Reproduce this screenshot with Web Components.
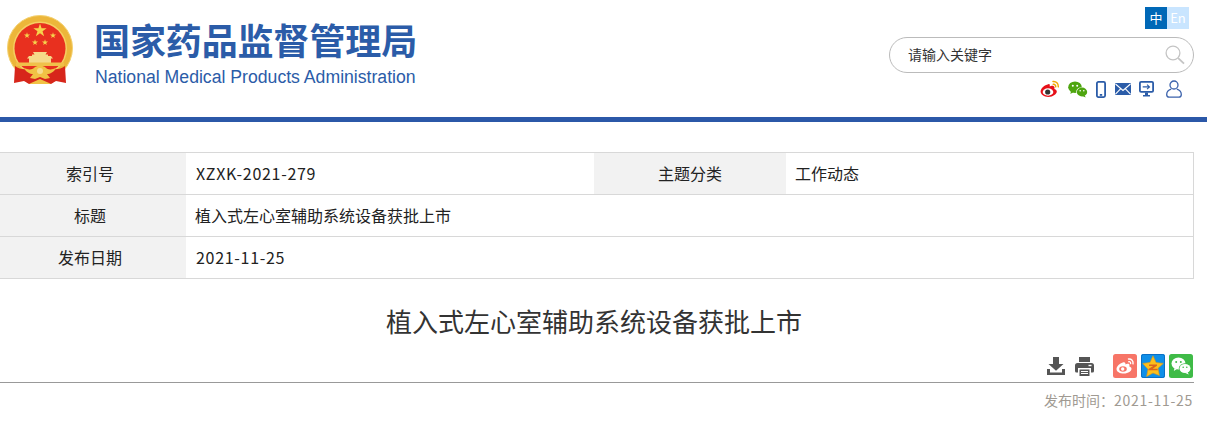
<!DOCTYPE html>
<html lang="zh-CN">
<head>
<meta charset="utf-8">
<title>植入式左心室辅助系统设备获批上市</title>
<style>
  html, body { margin: 0; padding: 0; background: #fff; overflow: hidden; }
  body { font-family: "Noto Sans CJK SC", "Liberation Sans", sans-serif; color: #333; }
</style>
</head>
<body>
<site-header></site-header>
<info-table>
  <info-row>
    <info-cell label="索引号" latin>XZXK-2021-279</info-cell>
    <info-cell label="主题分类" second>工作动态</info-cell>
  </info-row>
  <info-row><info-cell label="标题" wide>植入式左心室辅助系统设备获批上市</info-cell></info-row>
  <info-row><info-cell label="发布日期" wide latin>2021-11-25</info-cell></info-row>
</info-table>
<article-head date="2021-11-25">植入式左心室辅助系统设备获批上市</article-head>

<script>
const ICONS = {
  weibo: `<svg width="20" height="18" viewBox="0 0 20 18"><path d="M8.300 4.200C4.500 5 .6 8.400.6 11.600c0 3 3.500 5.400 7.700 5.400 5 0 8.500-3 8.500-5.400 0-1.800-1.700-2.400-2.500-2.700.5-1.300.4-2.700-1-3-1.200-.3-3 .5-3.600.7.300-1.100.3-3.300-1.400-2.400z" fill="#e60f18"/><ellipse cx="8" cy="12" rx="5.300" ry="3.700" fill="#fff"/><circle cx="7.700" cy="12" r="2.600" fill="#333"/><path d="M13 1.500c3-.5 5.700 2 5.300 5.300M13.300 4.300c1.500-.2 2.700 1 2.400 2.500" fill="none" stroke="#f0a800" stroke-width="1.500" stroke-linecap="round"/></svg>`,
  wechat: `<svg width="20" height="17" viewBox="0 0 20 17"><ellipse cx="7" cy="6.200" rx="6.800" ry="5.800" fill="#4ea50f"/><path d="M3 10l-.6 3 3.200-2z" fill="#4ea50f"/><ellipse cx="14" cy="11" rx="5.800" ry="4.800" fill="#fff"/><ellipse cx="14" cy="11" rx="5.200" ry="4.400" fill="#4ea50f"/><path d="M16.500 14l1.200 2.600-3.400-1.700z" fill="#4ea50f"/><circle cx="4.800" cy="4.700" r="1" fill="#fff"/><circle cx="9.200" cy="4.700" r="1" fill="#fff"/><circle cx="12.200" cy="9.800" r=".8" fill="#fff"/><circle cx="15.800" cy="9.800" r=".8" fill="#fff"/></svg>`,
  phone: `<svg width="10" height="17" viewBox="0 0 10 17"><rect x=".9" y=".9" width="8.200" height="15.200" rx="1.500" fill="none" stroke="#2b5ca8" stroke-width="1.800"/><rect x="3.800" y="13" width="2.400" height="1.800" fill="#2b5ca8"/></svg>`,
  mail: `<svg width="16" height="12" viewBox="0 0 16 12"><rect width="16" height="12" rx="1" fill="#2b5ca8"/><path d="M.5 1L8 7.500 15.500 1M.5 11.200l5.300-5.500M15.500 11.200l-5.300-5.500" fill="none" stroke="#fff" stroke-width="1.100"/></svg>`,
  screen: `<svg width="15" height="16" viewBox="0 0 15 16"><rect x=".9" y=".9" width="13.200" height="10" rx="1.200" fill="none" stroke="#2b5ca8" stroke-width="1.800"/><path d="M3.700 5.900h7M8 3.700l2.500 2.200L8 8.100" fill="none" stroke="#2b5ca8" stroke-width="1.100"/><path d="M6 11.500h3V14h2v1.500H4V14h2z" fill="#2b5ca8"/></svg>`,
  user: `<svg width="16" height="18" viewBox="0 0 16 18"><circle cx="8" cy="5" r="4" fill="none" stroke="#3b62ac" stroke-width="1.300"/><path d="M5.200 9.200C2.500 10 .7 12 .7 14.500c0 1.800.8 2.700 2.500 2.700h9.600c1.700 0 2.500-.9 2.500-2.700 0-2.500-1.800-4.500-4.500-5.300" fill="none" stroke="#3b62ac" stroke-width="1.300"/></svg>`,
  search: `<svg width="20" height="20" viewBox="0 0 20 20"><circle cx="8" cy="8" r="6.900" fill="none" stroke="#c4c4c4" stroke-width="1.300"/><path d="M13.200 13.200l5.800 5.400" stroke="#c4c4c4" stroke-width="1.800"/></svg>`,
  download: `<svg width="18" height="18" viewBox="0 0 18 18"><path d="M6 0h6v7h4.500L9 13.800 1.500 7H6z" fill="#555"/><path d="M0 12h3v3.500h12V12h3v6H0z" fill="#555"/></svg>`,
  print: `<svg width="19" height="19" viewBox="0 0 19 19"><path d="M4 0h11v5H4z" fill="#555"/><path d="M2.500 6h14A2.500 2.500 0 0 1 19 8.500v5.500a1.500 1.500 0 0 1-1.500 1.500H16V11H3v4.500H1.500A1.500 1.500 0 0 1 0 14V8.500A2.500 2.500 0 0 1 2.500 6z" fill="#555"/><path d="M4.500 12.500h10V19h-10z" fill="#555"/><path d="M6 14.500h7M6 16.500h7" stroke="#fff"/><rect x="13.500" y="7.800" width="3" height="1.400" fill="#fff"/></svg>`,
  shareWeibo: `<svg width="24" height="24" viewBox="0 0 24 24"><rect width="24" height="24" rx="2.500" fill="#f77567"/><path d="M9.800 8.500c-3 1-6.300 3.700-6.300 6.400 0 2.800 3.500 4.600 7.200 4.600 4.800 0 7.800-2.700 7.800-4.800 0-1.500-1.400-2-2.200-2.300.4-1.200.3-2.300-.9-2.600-1-.2-2.400.4-3 .6.200-1-.1-2.700-2.600-1.900z" fill="#fff"/><ellipse cx="10" cy="15" rx="3.800" ry="2.800" fill="#f77567"/><circle cx="9.700" cy="15" r="1.700" fill="#fff"/><path d="M15.500 5c3-.4 5 2 4.500 4.800M15.800 7.700c1.200-.2 2 .7 1.800 1.900" fill="none" stroke="#fff" stroke-width="1.400" stroke-linecap="round"/></svg>`,
  shareQzone: `<svg width="24" height="24" viewBox="0 0 24 24"><rect width="24" height="24" rx="2" fill="#0f8fe8"/><rect x=".5" y=".5" width="23" height="23" rx="2" fill="none" stroke="#0b6fc4"/><path d="M12 1.800l3 6.700 7.300.9-5.300 4.800 1.400 7.300L12 19l-6.400 3.500L7 15.200 1.700 9.400 9 8.500z" fill="#fdbf1c" stroke="#e09a10" stroke-width=".6"/><path d="M8 10.500h8v1.300l-4.300 3H16.300l.7 1.500H7.500v-1.300l4.700-3H8z" fill="#d9651e"/></svg>`,
  shareWechat: `<svg width="24" height="24" viewBox="0 0 24 24"><rect width="24" height="24" rx="2.500" fill="#3fbb47"/><ellipse cx="9.500" cy="9.500" rx="7" ry="6" fill="#fff"/><path d="M5.500 14l-.7 3 3.200-2z" fill="#fff"/><ellipse cx="16" cy="14.500" rx="6.200" ry="5.200" fill="#3fbb47"/><ellipse cx="16" cy="14.500" rx="5.500" ry="4.600" fill="#fff"/><path d="M18.500 18l1.300 2.500-3.500-1.600z" fill="#fff"/><circle cx="7.200" cy="8" r="1" fill="#3fbb47"/><circle cx="11.800" cy="8" r="1" fill="#3fbb47"/><circle cx="14.200" cy="13.300" r=".8" fill="#3fbb47"/><circle cx="17.800" cy="13.300" r=".8" fill="#3fbb47"/></svg>`
}

class SiteIcon extends HTMLElement {
  constructor () {
    super()
    this.attachShadow({ mode: 'open' })
  }

  connectedCallback () {
    this.shadowRoot.innerHTML = `<style>:host { display: block; line-height: 0; }</style>${ICONS[this.getAttribute('name')]}`
  }
}

const STAR = 'M0-1L.2245-.309H.951L.363.118.588.809 0 .382-.588.809-.363.118-.951-.309H-.2245z'

const emblemTemplate = document.createElement('template')
emblemTemplate.innerHTML = `
  <style>:host { display: block; width: 67px; height: 72px; line-height: 0; }</style>
  <svg width="67" height="72" viewBox="0 0 67 72">
    <circle cx="33" cy="33" r="32.500" fill="#ecb63a" stroke="#f4d272"/>
    <circle cx="33" cy="33.500" r="27" fill="#f5cf62"/>
    <circle cx="33" cy="33.500" r="25.500" fill="#e8301f"/>
    <path transform="translate(33 15.500) scale(7)" d="${STAR}" fill="#f6d34c"/>
    <path transform="translate(20 20.500) scale(3.200)" d="${STAR}" fill="#f6d34c"/>
    <path transform="translate(46 20.500) scale(3.200)" d="${STAR}" fill="#f6d34c"/>
    <path transform="translate(28 27.500) scale(3.200)" d="${STAR}" fill="#f6d34c"/>
    <path transform="translate(38 27.500) scale(3.200)" d="${STAR}" fill="#f6d34c"/>
    <path d="M26 37h14l-1.500 2.500H41V41h3l2 2.500h-2V48H22v-4.500h-2l2-2.500h3v-1.500h2.500z" fill="#f5d98a"/>
    <rect x="9" y="47.500" width="48" height="3.500" fill="#f0c04a"/>
    <path d="M8 51c5 4 11 4 17 2h16c6 2 12 2 17-2l1 17-10-2-5 3H22l-5-3-10 2z" fill="#d7261b"/>
    <path d="M17 53c4 2 9 2 11-1l5-2 5 2c2 3 7 3 11 1-2 4-6 6-9 6l3 4-5 1-5-2-5 2-5-1 3-4c-3 0-7-2-9-6z" fill="#f1c245"/>
    <circle cx="33" cy="56" r="3" fill="#f7dc8f"/>
    <path d="M24 68l9-4 9 4 2 1H22z" fill="#f1c245"/>
  </svg>
`

class SiteEmblem extends HTMLElement {
  constructor () {
    super()
    this.attachShadow({ mode: 'open' })
    this.shadowRoot.appendChild(emblemTemplate.content.cloneNode(true))
  }
}

const searchTemplate = document.createElement('template')
searchTemplate.innerHTML = `
  <style>
    :host {
      display: flex;
      align-items: center;
      justify-content: space-between;
      box-sizing: border-box;
      width: 305px;
      height: 36px;
      padding: 0 8px 0 18px;
      border: 1px solid #bbb;
      border-radius: 18px;
      font-size: 14px;
      color: #333;
    }
    span { margin-bottom: 2px; }
  </style>
  <span>请输入关键字</span>
  <site-icon name="search"></site-icon>
`

class SearchBox extends HTMLElement {
  constructor () {
    super()
    this.attachShadow({ mode: 'open' })
    this.shadowRoot.appendChild(searchTemplate.content.cloneNode(true))
  }
}

const headerTemplate = document.createElement('template')
headerTemplate.innerHTML = `
  <style>
    :host {
      display: block;
      box-sizing: border-box;
      height: 122px;
      border-bottom: 5px solid #2b58a8;
      padding: 7px 13px 0 7px;
    }
    .wrap { display: flex; justify-content: space-between; }
    .brand { display: flex; padding-top: 8px; }
    .names { margin: 4px 0 0 21px; color: #2b5ca8; }
    .cn {
      font-size: 36px;
      line-height: 40px;
      font-weight: 700;
      letter-spacing: -.1px;
      margin-left: -1px;
      white-space: nowrap;
    }
    .en {
      margin-top: 8px;
      font: 17.650px/20px "Liberation Sans", sans-serif;
      white-space: nowrap;
    }
    .tools { display: flex; flex-direction: column; align-items: flex-end; }
    .lang { display: flex; margin-right: 5px; font-size: 13px; line-height: 21px; text-align: center; color: #fff; }
    .lang span { width: 22px; height: 22px; background: #c9e5ff; }
    .lang .on { background: #0068b7; }
    search-box { margin-top: 8px; }
    .icons { display: flex; align-items: center; height: 18px; margin: 7px 12px 0 0; }
  </style>
  <div class="wrap">
    <div class="brand">
      <site-emblem></site-emblem>
      <div class="names">
        <div class="cn">国家药品监督管理局</div>
        <div class="en">National Medical Products Administration</div>
      </div>
    </div>
    <div class="tools">
      <div class="lang"><span class="on">中</span><span>En</span></div>
      <search-box></search-box>
      <div class="icons">
        <site-icon name="weibo"></site-icon>
        <site-icon name="wechat" style="margin-left:8px"></site-icon>
        <site-icon name="phone" style="margin-left:8px"></site-icon>
        <site-icon name="mail" style="margin-left:9px"></site-icon>
        <site-icon name="screen" style="margin-left:8px"></site-icon>
        <site-icon name="user" style="margin-left:12px"></site-icon>
      </div>
    </div>
  </div>
`

class SiteHeader extends HTMLElement {
  constructor () {
    super()
    this.attachShadow({ mode: 'open' })
    this.shadowRoot.appendChild(headerTemplate.content.cloneNode(true))
  }
}

const tableTemplate = document.createElement('template')
tableTemplate.innerHTML = `
  <style>
    :host {
      display: block;
      box-sizing: border-box;
      width: 1194px;
      margin-top: 30px;
      border-top: 1px solid #d8d8d8;
      border-right: 1px solid #d8d8d8;
      font-size: 16px;
      color: #222;
    }
  </style>
  <slot></slot>
`

class InfoTable extends HTMLElement {
  constructor () {
    super()
    this.attachShadow({ mode: 'open' })
    this.shadowRoot.appendChild(tableTemplate.content.cloneNode(true))
  }
}

const rowTemplate = document.createElement('template')
rowTemplate.innerHTML = `
  <style>
    :host {
      display: flex;
      height: 42px;
      box-sizing: border-box;
      border-bottom: 1px solid #d8d8d8;
    }
  </style>
  <slot></slot>
`

class InfoRow extends HTMLElement {
  constructor () {
    super()
    this.attachShadow({ mode: 'open' })
    this.shadowRoot.appendChild(rowTemplate.content.cloneNode(true))
  }
}

const cellTemplate = document.createElement('template')
cellTemplate.innerHTML = `
  <style>
    :host { display: flex; flex: 0 0 594px; line-height: 41px; }
    :host([wide]), :host([second]) { flex: 1 1 auto; }
    #label { box-sizing: border-box; flex: 0 0 186px; padding-right: 6px; background: #f2f2f2; text-align: center; }
    :host([second]) #label { flex-basis: 192px; padding-right: 0; }
    .value { padding-left: 9px; }
    :host([latin]) .value { padding-left: 10px; letter-spacing: .7px; }
  </style>
  <div id="label"></div>
  <div class="value"><slot></slot></div>
`

class InfoCell extends HTMLElement {
  constructor () {
    super()
    this.attachShadow({ mode: 'open' })
    this.shadowRoot.appendChild(cellTemplate.content.cloneNode(true))
    this.elLabel = this.shadowRoot.querySelector('#label')
  }

  connectedCallback () {
    this.elLabel.textContent = this.getAttribute('label')
  }
}

const articleTemplate = document.createElement('template')
articleTemplate.innerHTML = `
  <style>
    :host { display: block; width: 1194px; }
    h1 {
      margin: 23px 0 0;
      padding-right: 6px;
      font-size: 26px;
      line-height: 38px;
      font-weight: 400;
      text-align: center;
      color: #333;
    }
    .tools {
      display: flex;
      align-items: center;
      justify-content: flex-end;
      height: 24px;
      margin-top: 14px;
      padding: 0 1px 4px 0;
      border-bottom: 1px solid #999;
    }
    .date { margin-top: 7px; padding-right: 1px; font-size: 14px; line-height: 20px; text-align: right; color: #a09a92; }
    #date { letter-spacing: .7px; }
  </style>
  <h1><slot></slot></h1>
  <div class="tools">
    <site-icon name="download"></site-icon>
    <site-icon name="print" style="margin-left:10px"></site-icon>
    <site-icon name="shareWeibo" style="margin-left:19px"></site-icon>
    <site-icon name="shareQzone" style="margin-left:4px"></site-icon>
    <site-icon name="shareWechat" style="margin-left:4px"></site-icon>
  </div>
  <div class="date">发布时间&#65306;<span id="date"></span></div>
`

class ArticleHead extends HTMLElement {
  constructor () {
    super()
    this.attachShadow({ mode: 'open' })
    this.shadowRoot.appendChild(articleTemplate.content.cloneNode(true))
    this.elDate = this.shadowRoot.querySelector('#date')
  }

  connectedCallback () {
    this.elDate.textContent = this.getAttribute('date')
  }
}

window.customElements.define('site-icon', SiteIcon)
window.customElements.define('site-emblem', SiteEmblem)
window.customElements.define('search-box', SearchBox)
window.customElements.define('site-header', SiteHeader)
window.customElements.define('info-table', InfoTable)
window.customElements.define('info-row', InfoRow)
window.customElements.define('info-cell', InfoCell)
window.customElements.define('article-head', ArticleHead)
</script>
</body>
</html>
